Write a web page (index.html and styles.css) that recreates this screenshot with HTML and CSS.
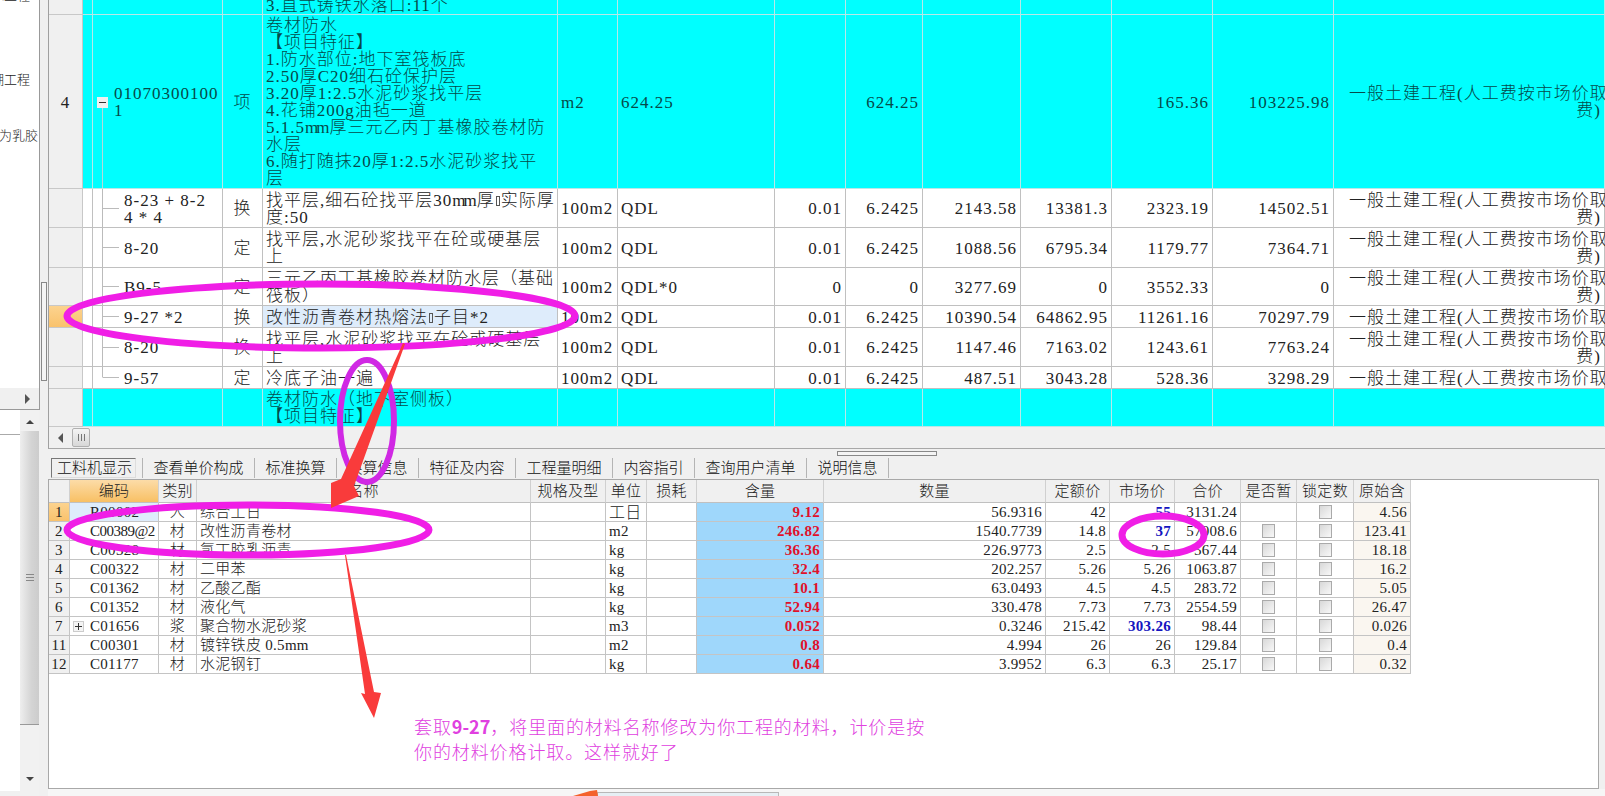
FILE: index.html
```html
<!DOCTYPE html>
<html lang="zh-CN">
<head>
    <meta charset="UTF-8">
    <title>工料机显示</title>
    <link rel="stylesheet" href="styles.css">
</head>
<body>
    <!-- Left project tree, only its right edge is visible -->
    <aside class="side">
        <div class="side-top">
            <div class="tree-list">
                <div class="tree-item first">防水工程</div>
                <div class="tree-item second">天棚工程</div>
                <div class="tree-item third">防水涂料改为乳胶</div>
            </div>
            <div class="side-hscroll"><span class="arrow-right"></span></div>
        </div>
        <div class="side-bottom">
            <div class="side-blank"><div class="side-blank-head"></div></div>
            <div class="vscroll">
                <span class="arrow-up"></span>
                <div class="vscroll-thumb"><span class="grip-h"></span></div>
                <span class="arrow-down"></span>
            </div>
        </div>
    </aside>

    <main class="main">
        <section class="upper">
            <div class="upper-body">
                <table class="grid-top">
                    <colgroup>
                        <col class="t-num"><col class="t-tree"><col class="t-code"><col class="t-type"><col class="t-name">
                        <col class="t-unit"><col class="t-qty"><col class="t-c1"><col class="t-c2"><col class="t-c3">
                        <col class="t-c4"><col class="t-c5"><col class="t-c6"><col class="t-fee">
                    </colgroup>
                    <tr class="cy">
                        <td class="head"><div class="cell h15"></div></td><td><div class="cell h15"></div></td><td><div class="cell h15"></div></td><td><div class="cell h15"></div></td>
                        <td><div class="cell h15 low">3.直式铸铁水落口:11个</div></td>
                        <td><div class="cell h15"></div></td><td><div class="cell h15"></div></td><td><div class="cell h15"></div></td><td><div class="cell h15"></div></td><td><div class="cell h15"></div></td><td><div class="cell h15"></div></td><td><div class="cell h15"></div></td><td><div class="cell h15"></div></td><td><div class="cell h15"></div></td>
                    </tr>
                    <tr class="cy">
                        <td class="head mid"><div class="cell h174">4</div></td>
                        <td><div class="cell h174"></div></td>
                        <td class="tree-top"><div class="cell h174 code-top"><span class="minus-box"></span><span>01070300100<br>1</span></div></td>
                        <td class="mid"><div class="cell h174">项</div></td>
                        <td><div class="cell h174"><div>卷材防水<br>【项目特征】<br>1.防水部位:地下室筏板底<br>2.50厚C20细石砼保护层<br>3.20厚1:2.5水泥砂浆找平层<br>4.花铺200g油毡一道<br>5.1.5<span class="mm">mm</span>厚三元乙丙丁基橡胶卷材防<br>水层<br>6.随打随抹20厚1:2.5水泥砂浆找平<br>层</div></div></td>
                        <td><div class="cell h174">m2</div></td>
                        <td><div class="cell h174">624.25</div></td>
                        <td><div class="cell h174"></div></td>
                        <td class="num"><div class="cell h174">624.25</div></td>
                        <td><div class="cell h174"></div></td><td><div class="cell h174"></div></td>
                        <td class="num"><div class="cell h174">165.36</div></td>
                        <td class="num"><div class="cell h174">103225.98</div></td>
                        <td><div class="cell h174 fee">一般土建工程(人工费按市场价取<span class="fee-end">费)</span></div></td>
                    </tr>
                    <tr>
                        <td class="head"><div class="cell h39"></div></td><td><div class="cell h39"></div></td>
                        <td class="tree-mid"><div class="cell h39 code-sub"><div>8-23 + 8-2<br>4 * 4</div></div></td>
                        <td class="mid"><div class="cell h39">换</div></td>
                        <td><div class="cell h39"><div>找平层,细石砼找平层30<span class="mm">mm</span>厚<span class="tofu"></span>实际厚<br>度:50</div></div></td>
                        <td><div class="cell h39">100m2</div></td><td><div class="cell h39">QDL</div></td>
                        <td class="num"><div class="cell h39">0.01</div></td><td class="num"><div class="cell h39">6.2425</div></td><td class="num"><div class="cell h39">2143.58</div></td><td class="num"><div class="cell h39">13381.3</div></td><td class="num"><div class="cell h39">2323.19</div></td><td class="num"><div class="cell h39">14502.51</div></td>
                        <td><div class="cell h39 fee">一般土建工程(人工费按市场价取<span class="fee-end">费)</span></div></td>
                    </tr>
                    <tr>
                        <td class="head"><div class="cell h40"></div></td><td><div class="cell h40"></div></td>
                        <td class="tree-mid"><div class="cell h40 code-sub">8-20</div></td>
                        <td class="mid"><div class="cell h40">定</div></td>
                        <td><div class="cell h40"><div>找平层,水泥砂浆找平在砼或硬基层<br>上</div></div></td>
                        <td><div class="cell h40">100m2</div></td><td><div class="cell h40">QDL</div></td>
                        <td class="num"><div class="cell h40">0.01</div></td><td class="num"><div class="cell h40">6.2425</div></td><td class="num"><div class="cell h40">1088.56</div></td><td class="num"><div class="cell h40">6795.34</div></td><td class="num"><div class="cell h40">1179.77</div></td><td class="num"><div class="cell h40">7364.71</div></td>
                        <td><div class="cell h40 fee">一般土建工程(人工费按市场价取<span class="fee-end">费)</span></div></td>
                    </tr>
                    <tr>
                        <td class="head"><div class="cell h38"></div></td><td><div class="cell h38"></div></td>
                        <td class="tree-mid"><div class="cell h38 code-sub">B9-5</div></td>
                        <td class="mid"><div class="cell h38">定</div></td>
                        <td><div class="cell h38"><div>三元乙丙丁基橡胶卷材防水层（基础<br>筏板）</div></div></td>
                        <td><div class="cell h38">100m2</div></td><td><div class="cell h38">QDL*0</div></td>
                        <td class="num"><div class="cell h38">0</div></td><td class="num"><div class="cell h38">0</div></td><td class="num"><div class="cell h38">3277.69</div></td><td class="num"><div class="cell h38">0</div></td><td class="num"><div class="cell h38">3552.33</div></td><td class="num"><div class="cell h38">0</div></td>
                        <td><div class="cell h38 fee">一般土建工程(人工费按市场价取<span class="fee-end">费)</span></div></td>
                    </tr>
                    <tr>
                        <td class="head current"><div class="cell h22"></div></td><td><div class="cell h22"></div></td>
                        <td class="tree-mid"><div class="cell h22 code-sub">9-27 *2</div></td>
                        <td class="mid"><div class="cell h22">换</div></td>
                        <td class="picked"><div class="cell h22"><div>改性沥青卷材热熔法<span class="tofu"></span>子目*2</div></div></td>
                        <td><div class="cell h22">100m2</div></td><td><div class="cell h22">QDL</div></td>
                        <td class="num"><div class="cell h22">0.01</div></td><td class="num"><div class="cell h22">6.2425</div></td><td class="num"><div class="cell h22">10390.54</div></td><td class="num"><div class="cell h22">64862.95</div></td><td class="num"><div class="cell h22">11261.16</div></td><td class="num"><div class="cell h22">70297.79</div></td>
                        <td><div class="cell h22 fee">一般土建工程(人工费按市场价取</div></td>
                    </tr>
                    <tr>
                        <td class="head"><div class="cell h39"></div></td><td><div class="cell h39"></div></td>
                        <td class="tree-mid"><div class="cell h39 code-sub">8-20</div></td>
                        <td class="mid"><div class="cell h39">换</div></td>
                        <td><div class="cell h39"><div>找平层,水泥砂浆找平在砼或硬基层<br>上</div></div></td>
                        <td><div class="cell h39">100m2</div></td><td><div class="cell h39">QDL</div></td>
                        <td class="num"><div class="cell h39">0.01</div></td><td class="num"><div class="cell h39">6.2425</div></td><td class="num"><div class="cell h39">1147.46</div></td><td class="num"><div class="cell h39">7163.02</div></td><td class="num"><div class="cell h39">1243.61</div></td><td class="num"><div class="cell h39">7763.24</div></td>
                        <td><div class="cell h39 fee">一般土建工程(人工费按市场价取<span class="fee-end">费)</span></div></td>
                    </tr>
                    <tr>
                        <td class="head"><div class="cell h22"></div></td><td><div class="cell h22"></div></td>
                        <td class="tree-last"><div class="cell h22 code-sub">9-57</div></td>
                        <td class="mid"><div class="cell h22">定</div></td>
                        <td><div class="cell h22">冷底子油一遍</div></td>
                        <td><div class="cell h22">100m2</div></td><td><div class="cell h22">QDL</div></td>
                        <td class="num"><div class="cell h22">0.01</div></td><td class="num"><div class="cell h22">6.2425</div></td><td class="num"><div class="cell h22">487.51</div></td><td class="num"><div class="cell h22">3043.28</div></td><td class="num"><div class="cell h22">528.36</div></td><td class="num"><div class="cell h22">3298.29</div></td>
                        <td><div class="cell h22 fee">一般土建工程(人工费按市场价取</div></td>
                    </tr>
                    <tr class="cy">
                        <td class="head"><div class="cell h38"></div></td><td><div class="cell h38"></div></td><td><div class="cell h38"></div></td><td><div class="cell h38"></div></td>
                        <td><div class="cell h38"><div>卷材防水（地下室侧板）<br>【项目特征】</div></div></td>
                        <td><div class="cell h38"></div></td><td><div class="cell h38"></div></td><td><div class="cell h38"></div></td><td><div class="cell h38"></div></td><td><div class="cell h38"></div></td><td><div class="cell h38"></div></td><td><div class="cell h38"></div></td><td><div class="cell h38"></div></td><td><div class="cell h38"></div></td>
                    </tr>
                </table>
            </div>
            <div class="hscroll">
                <span class="arrow-left"></span>
                <span class="hscroll-thumb"></span>
            </div>
        </section>

        <nav class="tabs">
            <div class="tab tab-first"><span class="tab-on">工料机显示</span></div>
            <div class="tab">查看单价构成</div>
            <div class="tab">标准换算</div>
            <div class="tab">换算信息</div>
            <div class="tab">特征及内容</div>
            <div class="tab">工程量明细</div>
            <div class="tab">内容指引</div>
            <div class="tab">查询用户清单</div>
            <div class="tab">说明信息</div>
        </nav>

        <section class="lower">
            <table class="grid-low">
                <colgroup>
                    <col class="l-num"><col class="l-code"><col class="l-cat"><col class="l-name"><col class="l-spec">
                    <col class="l-unit"><col class="l-loss"><col class="l-qty"><col class="l-amt"><col class="l-base">
                    <col class="l-mkt"><col class="l-tot"><col class="l-temp"><col class="l-lock"><col class="l-orig">
                </colgroup>
                <tr class="low-head">
                    <th></th><th class="th-on">编码</th><th>类别</th><th>名称</th><th>规格及型</th><th>单位</th><th>损耗</th><th>含量</th><th>数量</th><th>定额价</th><th>市场价</th><th>合价</th><th>是否暂</th><th>锁定数</th><th>原始含</th>
                </tr>
                <tr>
                    <td class="rn rn-on">1</td><td class="code code-on">R00002</td><td class="c">人</td><td class="nm">综合工日</td><td></td><td class="un big">工日</td><td></td><td class="amt">9.12</td><td class="r">56.9316</td><td class="r">42</td><td class="r blue">55</td><td class="r">3131.24</td><td></td><td class="c"><span class="chk"></span></td><td class="r orig">4.56</td>
                </tr>
                <tr>
                    <td class="rn">2</td><td class="code code-tight">C00389@2</td><td class="c">材</td><td class="nm">改性沥青卷材</td><td></td><td class="un">m2</td><td></td><td class="amt">246.82</td><td class="r">1540.7739</td><td class="r">14.8</td><td class="r blue">37</td><td class="r">57008.6</td><td class="c"><span class="chk"></span></td><td class="c"><span class="chk"></span></td><td class="r orig">123.41</td>
                </tr>
                <tr>
                    <td class="rn">3</td><td class="code">C00328</td><td class="c">材</td><td class="nm">氯丁胶乳沥青</td><td></td><td class="un">kg</td><td></td><td class="amt">36.36</td><td class="r">226.9773</td><td class="r">2.5</td><td class="r">2.5</td><td class="r">567.44</td><td class="c"><span class="chk"></span></td><td class="c"><span class="chk"></span></td><td class="r orig">18.18</td>
                </tr>
                <tr>
                    <td class="rn">4</td><td class="code">C00322</td><td class="c">材</td><td class="nm">二甲苯</td><td></td><td class="un">kg</td><td></td><td class="amt">32.4</td><td class="r">202.257</td><td class="r">5.26</td><td class="r">5.26</td><td class="r">1063.87</td><td class="c"><span class="chk"></span></td><td class="c"><span class="chk"></span></td><td class="r orig">16.2</td>
                </tr>
                <tr>
                    <td class="rn">5</td><td class="code">C01362</td><td class="c">材</td><td class="nm">乙酸乙酯</td><td></td><td class="un">kg</td><td></td><td class="amt">10.1</td><td class="r">63.0493</td><td class="r">4.5</td><td class="r">4.5</td><td class="r">283.72</td><td class="c"><span class="chk"></span></td><td class="c"><span class="chk"></span></td><td class="r orig">5.05</td>
                </tr>
                <tr>
                    <td class="rn">6</td><td class="code">C01352</td><td class="c">材</td><td class="nm">液化气</td><td></td><td class="un">kg</td><td></td><td class="amt">52.94</td><td class="r">330.478</td><td class="r">7.73</td><td class="r">7.73</td><td class="r">2554.59</td><td class="c"><span class="chk"></span></td><td class="c"><span class="chk"></span></td><td class="r orig">26.47</td>
                </tr>
                <tr>
                    <td class="rn">7</td><td class="code code-plus"><span class="plus-box"></span>C01656</td><td class="c">浆</td><td class="nm">聚合物水泥砂浆</td><td></td><td class="un">m3</td><td></td><td class="amt">0.052</td><td class="r">0.3246</td><td class="r">215.42</td><td class="r blue">303.26</td><td class="r">98.44</td><td class="c"><span class="chk"></span></td><td class="c"><span class="chk"></span></td><td class="r orig">0.026</td>
                </tr>
                <tr>
                    <td class="rn">11</td><td class="code">C00301</td><td class="c">材</td><td class="nm">镀锌铁皮 0.5mm</td><td></td><td class="un">m2</td><td></td><td class="amt">0.8</td><td class="r">4.994</td><td class="r">26</td><td class="r">26</td><td class="r">129.84</td><td class="c"><span class="chk"></span></td><td class="c"><span class="chk"></span></td><td class="r orig">0.4</td>
                </tr>
                <tr>
                    <td class="rn">12</td><td class="code">C01177</td><td class="c">材</td><td class="nm">水泥钢钉</td><td></td><td class="un">kg</td><td></td><td class="amt">0.64</td><td class="r">3.9952</td><td class="r">6.3</td><td class="r">6.3</td><td class="r">25.17</td><td class="c"><span class="chk"></span></td><td class="c"><span class="chk"></span></td><td class="r orig">0.32</td>
                </tr>
            </table>
        </section>

        <div class="status"><div class="status-tab"></div></div>
    </main>

    <!-- Things that lie over the window: splitter handles and the hand-drawn markup -->
    <div class="split-v"></div>
    <div class="split-h"></div>
    <svg class="markup" width="1605" height="796" viewBox="0 0 1605 796">
        <ellipse cx="321" cy="316" rx="254" ry="32" fill="none" stroke="#f01ee6" stroke-width="7"/>
        <ellipse cx="367" cy="421" rx="27" ry="61" fill="none" stroke="#d028e4" stroke-width="6"/>
        <ellipse cx="248" cy="530" rx="181" ry="25" fill="none" stroke="#f01ee6" stroke-width="7"/>
        <ellipse cx="1163" cy="535" rx="41" ry="19" fill="none" stroke="#f01ee6" stroke-width="7"/>
        <polygon points="403,343 405,344 354,486 359,496 331,508 331,483 341,479" fill="#f93b3b"/>
        <polygon points="345,555 346,555 374,692 381,693 374,718 361,693 365,694" fill="#f93b3b"/>
        <polygon points="573,796 590,791 597,790 598,796" fill="#f4622c"/>
    </svg>
    <p class="note">套取<b>9-27</b>，将里面的材料名称修改为你工程的材料，计价是按<br>你的材料价格计取。这样就好了</p>
</body>
</html>
```

FILE: styles.css
```css
/* General Reset */
* {
    margin: 0;
    padding: 0;
    box-sizing: border-box;
}

body {
    display: flex;
    width: 1605px;
    height: 796px;
    overflow: hidden;
    font-family: "Liberation Serif", "Noto Sans CJK SC", serif;
    font-weight: 300;
    color: #222;
    background-color: #f0f0f0;
}

/* Left side */
.side {
    width: 48px;
    flex: none;
    display: flex;
    flex-direction: column;
}

.side-top {
    height: 410px;
    width: 40px;
    background-color: white;
    border-right: 1px solid #999;
    border-bottom: 1px solid #999;
    display: flex;
    flex-direction: column;
    overflow: hidden;
}

.tree-list {
    flex: 1;
    font-size: 13px;
    line-height: 14px;
    margin-top: -11px;
}

.tree-item {
    white-space: nowrap;
    display: flex;
    justify-content: flex-end;
    overflow: hidden;
}

.tree-item.first {
    width: 30px;
}

.tree-item.second {
    width: 30px;
    margin-top: 70px;
}

.tree-item.third {
    width: 38px;
    margin-top: 42px;
}

.side-hscroll {
    height: 21px;
    background-color: #f0f0f0;
    display: flex;
    align-items: center;
    padding-left: 25px;
}

.arrow-right {
    border-left: 5px solid #555;
    border-top: 5px solid transparent;
    border-bottom: 5px solid transparent;
}

.side-bottom {
    flex: 1;
    display: flex;
}

.side-blank {
    width: 20px;
    background-color: white;
    margin-bottom: 5px;
}

.side-blank-head {
    height: 25px;
    border-bottom: 1px solid #aaa;
    background-color: white;
}

.vscroll {
    width: 19px;
    display: flex;
    flex-direction: column;
    align-items: center;
    background-color: #f1f1f1;
}

.arrow-up {
    margin: 10px 0 7px;
    border-bottom: 4px solid #444;
    border-left: 4px solid transparent;
    border-right: 4px solid transparent;
}

.arrow-down {
    margin-top: 52px;
    border-top: 4px solid #444;
    border-left: 4px solid transparent;
    border-right: 4px solid transparent;
}

.vscroll-thumb {
    width: 19px;
    height: 294px;
    background: linear-gradient(to right, #eee, #d4d4d4 60%, #ccc);
    border-bottom: 1px solid #999;
    display: flex;
    align-items: center;
    justify-content: center;
}

.grip-h {
    width: 8px;
    height: 7px;
    border-top: 1px solid #888;
    border-bottom: 1px solid #888;
    background: linear-gradient(#888, #888) 0 2px / 100% 1px no-repeat;
}

/* Right side */
.main {
    flex: 1;
    display: flex;
    flex-direction: column;
    min-width: 0;
}

.upper {
    height: 450px;
    border-left: 1px solid #a0a0a0;
    border-bottom: 1px solid #a8a8a8;
    display: flex;
    flex-direction: column;
}

.upper-body {
    height: 427px;
    overflow: hidden;
}

table {
    border-collapse: separate;
    border-spacing: 0;
    table-layout: fixed;
}

.grid-top {
    width: 1556px;
    font-size: 17px;
    letter-spacing: 1px;
    line-height: 17px;
    background-color: white;
}

.grid-top td {
    border-right: 1px solid #c0c0c0;
    border-bottom: 1px solid #c0c0c0;
    padding: 0 3px;
    white-space: nowrap;
}

.t-num { width: 34px; }
.t-tree { width: 10px; }
.t-code { width: 130px; }
.t-type { width: 40px; }
.t-name { width: 295px; }
.t-unit { width: 60px; }
.t-qty { width: 157px; }
.t-c1 { width: 71px; }
.t-c2 { width: 77px; }
.t-c3 { width: 98px; }
.t-c4 { width: 91px; }
.t-c5 { width: 101px; }
.t-c6 { width: 121px; }
.t-fee { width: 271px; }

.cell {
    display: flex;
    flex-direction: column;
    justify-content: center;
    overflow: hidden;
    padding-top: 1px;
}

.num .cell {
    align-items: flex-end;
}

.mid .cell {
    align-items: center;
}

.h15 { height: 14px; }
.h22 { height: 21px; }
.h38 { height: 37px; }
.h39 { height: 38px; }
.h40 { height: 39px; }
.h174 { height: 173px; }

.cell.low {
    display: block;
    margin-top: -3px;
    height: 17px;
    padding-top: 0;
}

.grid-top .cy td {
    background-color: #00ffff;
    border-color: #b8e8e8;
    color: #064a4a;
}

.grid-top td.head,
.grid-top .cy td.head {
    background-color: #f0f0f0;
    border-color: #c8c8c8;
    color: #222;
}

.grid-top td.current {
    background: linear-gradient(#fcd38f, #f9c26c);
}

.grid-top td.picked {
    background-color: #deecfb;
}

.mm {
    letter-spacing: -2px;
    margin-right: 2px;
}

.tofu {
    display: inline-block;
    width: 4px;
    height: 10px;
    margin: 0 1px;
    border: 1px solid #555;
}

.grid-top td.tree-top,
.grid-top td.tree-mid,
.grid-top td.tree-last {
    padding: 0;
}

.grid-top .cy td.tree-top {
    background: linear-gradient(#b8d8d8, #b8d8d8) 9px 100% / 1px 50% no-repeat, #00ffff;
}

.tree-mid {
    background:
        linear-gradient(#bbb, #bbb) 9px 0 / 1px 100% no-repeat,
        linear-gradient(#bbb, #bbb) 10px 50% / 16px 1px no-repeat;
}

.tree-last {
    background:
        linear-gradient(#bbb, #bbb) 9px 0 / 1px 50% no-repeat,
        linear-gradient(#bbb, #bbb) 10px 50% / 16px 1px no-repeat;
}

.code-top {
    flex-direction: row;
    justify-content: flex-start;
    align-items: center;
    padding-left: 4px;
    gap: 6px;
}

.minus-box {
    width: 11px;
    height: 11px;
    flex: none;
    background: linear-gradient(#333, #333) 50% 50% / 7px 1px no-repeat, #f0f0f0;
}

.code-sub {
    padding-left: 31px;
}

.fee {
    padding-left: 12px;
    margin-right: -30px;
}

.fee-end {
    align-self: flex-end;
    margin-right: 30px;
}

.hscroll {
    flex: 1;
    display: flex;
    align-items: center;
    padding-left: 9px;
}

.arrow-left {
    border-right: 5px solid #555;
    border-top: 5px solid transparent;
    border-bottom: 5px solid transparent;
}

.hscroll-thumb {
    margin-left: 9px;
    width: 18px;
    height: 19px;
    border: 1px solid #b0b0b0;
    border-radius: 2px;
    background:
        repeating-linear-gradient(to right, #777 0 1px, transparent 1px 3px) 5px 50% / 7px 7px no-repeat,
        linear-gradient(#f4f4f4, #d8d8d8);
}

.tabs {
    height: 30px;
    display: flex;
    align-items: flex-end;
    padding-bottom: 1px;
    font-size: 15px;
    line-height: 20px;
    color: #111;
}

.tab {
    padding: 0 10.5px;
    height: 20px;
    border-right: 1px solid #b4b4b4;
    white-space: nowrap;
}

.tab-first {
    padding: 0 6px 0 3px;
}

.tab-on {
    display: block;
    width: 85px;
    height: 20px;
    padding-left: 5px;
    border: 1px solid;
    border-color: #777 #ddd #ddd #777;
    line-height: 18px;
}

.lower {
    height: 310px;
    width: 1551px;
    background-color: white;
    border: 1px solid #a8a8a8;
}

.grid-low {
    width: 1362px;
    font-size: 15px;
    letter-spacing: 0.3px;
}

.l-num { width: 21px; }
.l-code { width: 89px; }
.l-cat { width: 38px; }
.l-name { width: 334px; }
.l-spec { width: 75px; }
.l-unit { width: 41px; }
.l-loss { width: 50px; }
.l-qty { width: 127px; }
.l-amt { width: 222px; }
.l-base { width: 64px; }
.l-mkt { width: 65px; }
.l-tot { width: 66px; }
.l-temp { width: 56px; }
.l-lock { width: 57px; }
.l-orig { width: 57px; }

.grid-low th {
    height: 23px;
    line-height: 20px;
    padding: 0;
    font-weight: 300;
    overflow: hidden;
    white-space: nowrap;
    background-color: #f0f0f0;
    border-right: 1px solid #d0d0d0;
    border-bottom: 1px solid #c0c0c0;
}

.grid-low th.th-on {
    background: linear-gradient(#fcdca8, #f8c064);
}

.grid-low td {
    height: 19px;
    line-height: 17px;
    padding: 1px 3px 0;
    overflow: hidden;
    white-space: nowrap;
    border-right: 1px solid #c4c4c4;
    border-bottom: 1px solid #c4c4c4;
}

.grid-low td.rn {
    padding: 1px 0 0;
    text-align: center;
    background-color: #f0f0f0;
}

.grid-low td.rn-on {
    background: linear-gradient(#fcd38f, #f9c26c);
}

.grid-low td.code {
    padding-left: 20px;
}

.grid-low td.code-tight {
    padding-right: 0;
    letter-spacing: -0.5px;
}

.grid-low td.code-plus {
    padding-left: 3px;
}

.code-on {
    background-color: #deecfb;
}

.plus-box {
    display: inline-block;
    width: 11px;
    height: 11px;
    margin-right: 6px;
    vertical-align: -1px;
    border: 1px solid #ccc;
    background:
        linear-gradient(#333, #333) 50% 50% / 7px 1px no-repeat,
        linear-gradient(#333, #333) 50% 50% / 1px 7px no-repeat,
        #f4f4f4;
}

.c {
    text-align: center;
}

.r {
    text-align: right;
}

.nm {
    padding-left: 3px;
}

.grid-low td.amt {
    text-align: right;
    font-weight: bold;
    color: #e0102a;
    background-color: #9fd7fb;
}

.blue {
    color: #1414c0;
    font-weight: bold;
}

.orig {
    background-color: #faf6f0;
}

.big {
    font-size: 16px;
}

.chk {
    display: inline-block;
    width: 13px;
    height: 14px;
    vertical-align: -2px;
    border: 1px solid #aaa;
    background: linear-gradient(135deg, #d8d8d8, #f8f8f8);
}

.status {
    flex: 1;
    padding: 3px 0 0 549px;
    background-color: #f6f6f6;
}

.status-tab {
    width: 182px;
    height: 4px;
    border: 1px solid #b8b8b8;
    border-bottom: none;
    background-color: #e6eff4;
}

/* Splitter handles */
.split-v {
    position: absolute;
    left: 41px;
    top: 282px;
    width: 6px;
    height: 99px;
    border: 1px solid #888;
    background-color: #f4f4f4;
}

.split-h {
    position: absolute;
    left: 837px;
    top: 451px;
    width: 100px;
    height: 5px;
    border: 1px solid #888;
    background-color: #f4f4f4;
}

/* Markup drawn on the screenshot */
.markup {
    position: absolute;
    left: 0;
    top: 0;
}

.note {
    position: absolute;
    left: 414px;
    top: 714px;
    font-family: "Noto Sans CJK SC", sans-serif;
    font-size: 18px;
    letter-spacing: 0.9px;
    line-height: 25px;
    color: #e040e0;
    white-space: nowrap;
}

.note b {
    font-weight: 700;
    letter-spacing: 0;
}
```
